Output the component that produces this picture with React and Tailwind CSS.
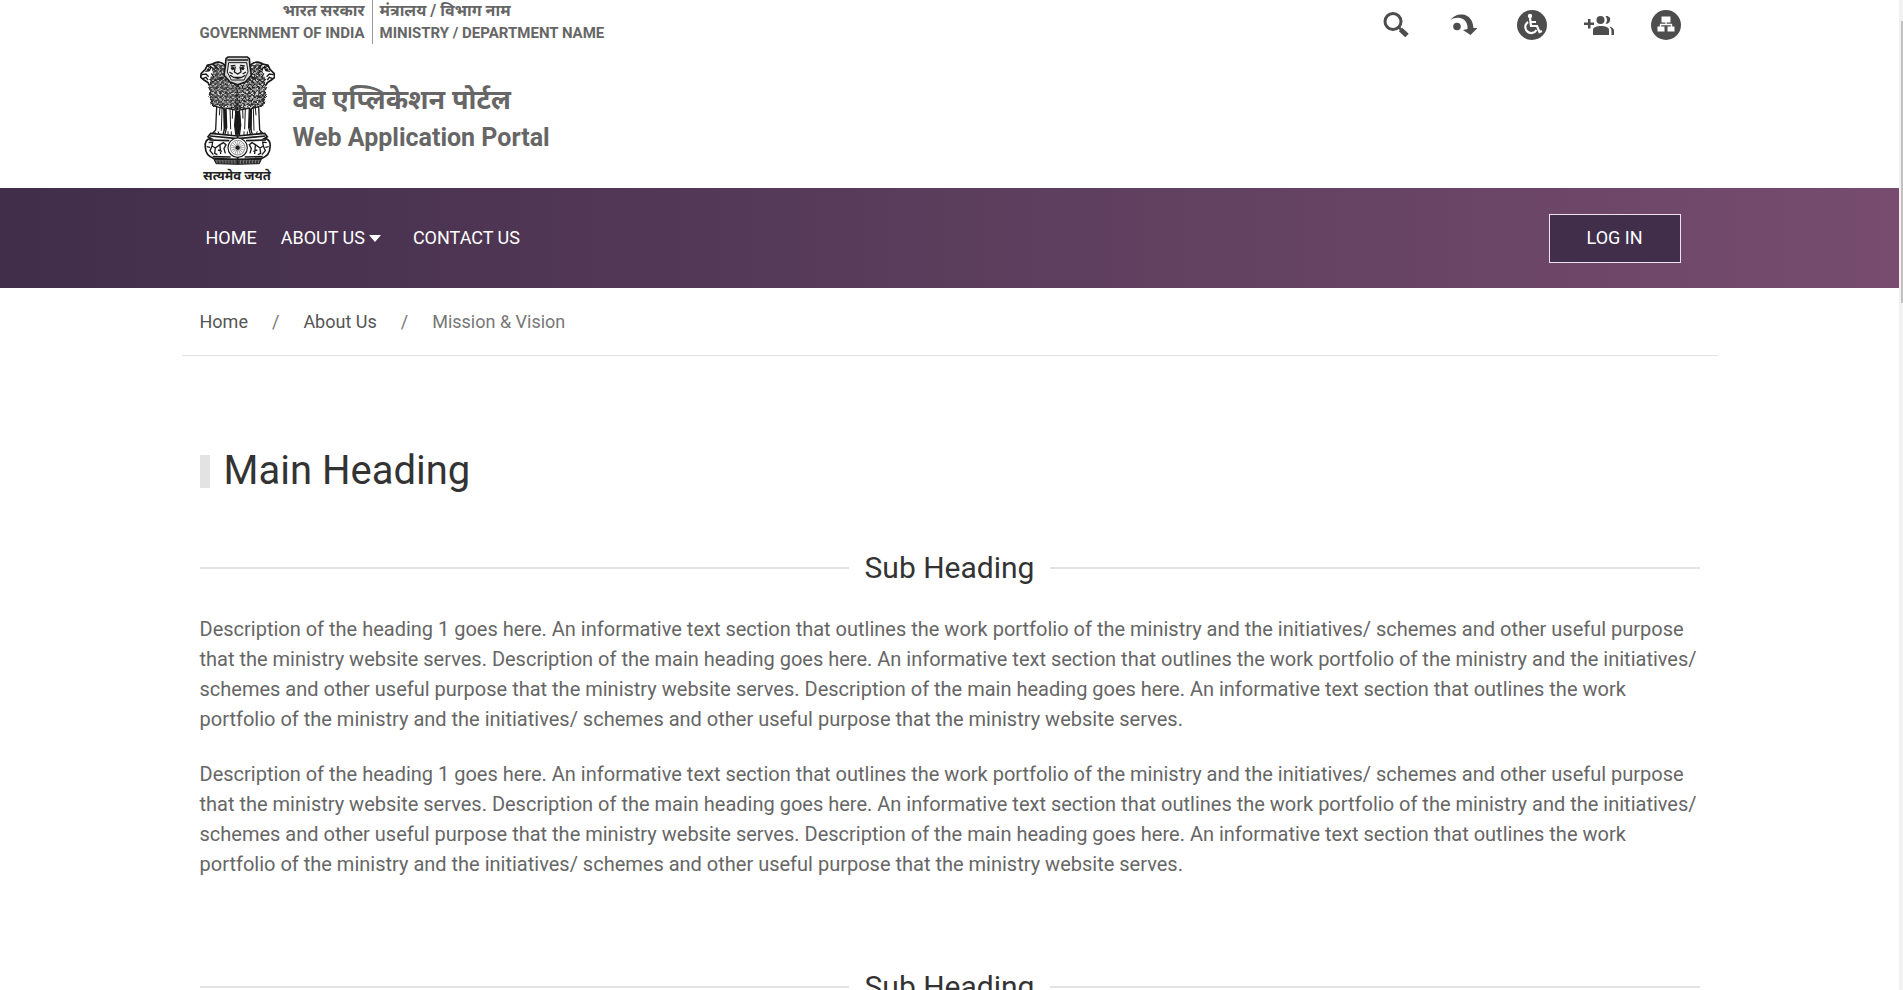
import React from 'react';

const LOREM_START =
    'Description of the heading 1 goes here. An informative text section that outlines the work portfolio of the ministry and the initiatives/ schemes and other useful purpose that the ministry website serves.';
const LOREM_REPEAT =
    'Description of the main heading goes here. An informative text section that outlines the work portfolio of the ministry and the initiatives/ schemes and other useful purpose that the ministry website serves.';

const paragraph = `${LOREM_START} ${LOREM_REPEAT} ${LOREM_REPEAT}`;

// One half of the emblem, mirrored for the other side
const EmblemHalf = () => (
    <g>
        {/* Side lion head */}
        <path
            d="M108 62 C98 48 82 48 70 56 L54 60 L48 72 L36 84 L34 96 L44 104 L56 112 L64 124 L96 130 L112 100Z"
            fill="#fff"
        />
        <g filter="url(#rough)">
            <path d="M66 58 L86 52 L106 62 L112 100 L100 130 L62 124 L58 104 L72 90Z" fill="url(#mane)" stroke="none" />
        </g>
        <path d="M54 62 L64 68 L60 76 L48 78 M38 88 L50 86 L58 94 M40 100 L50 96 L56 104 M62 62 L76 74 M70 56 L86 70 M66 84 L74 96" strokeWidth="4" />
        <circle cx="57" cy="73" r="3" fill="#1a1a1a" />
        <path d="M108 62 C98 48 82 48 70 56 L54 60 L48 72 L36 84 L34 96 L44 104 L56 112 L60 120" strokeWidth="5" />
        {/* Body mane */}
        <g filter="url(#rough)">
            <path
                d="M62 112 L112 92 L147 118 L147 194 L130 186 L122 194 L110 182 L98 190 L84 178 L70 182 L66 166 L58 152 L64 138 L58 126Z"
                fill="url(#mane)"
                strokeWidth="3"
            />
        </g>
        {/* Legs */}
        <path d="M82 184 L79 254 L68 266 L100 270 L106 250 L104 190Z" fill="#fff" strokeWidth="4" />
        <path d="M110 188 L112 246 L106 270 L140 272 L136 240 L140 194Z" fill="#fff" strokeWidth="4" />
        <path d="M92 186 L90 210 M98 190 L96 256 M122 190 L124 252 M130 190 L129 220 M76 260 L82 268 M86 258 L90 268 M116 258 L116 270 M126 258 L126 270" strokeWidth="3" />
        <path d="M102 190 L110 190 L112 246 L103 258Z M138 196 H147 V268 H140 L136 240Z" fill="#1a1a1a" stroke="none" />
        {/* Abacus side */}
        <path
            d="M145 272 L64 264 L56 274 L66 280 C50 280 46 292 48 306 C48 324 58 334 74 340 L145 342Z"
            fill="#fff"
            strokeWidth="5"
        />
        <path d="M62 272 L145 280 M60 284 L120 286 M70 334 L124 335" strokeWidth="5" />
        <path d="M58 292 L70 290 L68 302 L78 308 L92 298 L102 292 L110 298 L104 310 L108 324 M68 302 L62 316 L72 328 M78 308 L76 324 L84 328 M92 300 L94 326 M86 314 L98 318 M52 304 L62 306" strokeWidth="4" />
        {/* Plinth */}
        <path d="M74 342 L80 355 L145 357 L145 343Z" fill="url(#plinth)" strokeWidth="3" />
    </g>
);

const Emblem = () => (
    <svg className="w-[75px] h-[110px]" viewBox="32 32 225 330" fill="none" stroke="#1a1a1a" strokeWidth="3" aria-hidden="true">
        <defs>
            <filter id="rough">
                <feTurbulence type="fractalNoise" baseFrequency="0.09" numOctaves="2" seed="4" />
                <feDisplacementMap in="SourceGraphic" scale="12" xChannelSelector="R" yChannelSelector="G" />
            </filter>
            <pattern id="mane" width="15" height="13" patternUnits="userSpaceOnUse">
                <rect width="15" height="13" fill="#e0e0e0" stroke="none" />
                <path d="M0 3 Q4 -2 7 3 T15 3 M3 6 Q3 11 8 10 Q12 8 11 5 M0 13 Q3 8 6 13 M12 9 L15 12" stroke="#1a1a1a" strokeWidth="3" fill="none" />
            </pattern>
            <pattern id="plinth" width="9" height="14" patternUnits="userSpaceOnUse">
                <rect width="9" height="14" fill="#333" stroke="none" />
                <path d="M2 0 V14 M5 6 L8 10" stroke="#aaa" strokeWidth="2" />
            </pattern>
        </defs>
        <EmblemHalf />
        <g transform="translate(290 0) scale(-1 1)">
            <EmblemHalf />
        </g>
        {/* Front lion head */}
        <path d="M110 40 L116 35 L174 35 L180 40 L182 62 L186 90 L168 110 L145 118 L122 110 L104 90 L108 62Z" fill="#d5d5d5" strokeWidth="5" />
        <path d="M118 52 L172 52 L176 80 L164 104 L126 104 L114 80Z" fill="#eee" strokeWidth="3" />
        <path d="M114 44 H176 M124 62 L138 60 M152 60 L166 62 M138 64 L135 80 L145 86 L155 80 L152 64 M122 90 Q145 108 168 90 M120 80 L130 86 M170 80 L160 86 M132 96 H158" strokeWidth="4" />
        <circle cx="130" cy="69" r="4" fill="#1a1a1a" />
        <circle cx="160" cy="69" r="4" fill="#1a1a1a" />
        {/* Wheel */}
        <circle cx="145" cy="307" r="29" fill="#fff" strokeWidth="3.5" />
        <circle cx="145" cy="307" r="22" strokeWidth="2" stroke="#555" />
        {[0, 22, 45, 67, 90, 112, 135, 157].map((deg) => (
            <path key={deg} d="M125 307 H165" strokeWidth="1.5" stroke="#555" transform={`rotate(${deg} 145 307)`} />
        ))}
        <circle cx="145" cy="307" r="5" fill="#1a1a1a" />
    </svg>
);

const SearchIcon = () => (
    <svg className="w-[30px] h-[30px]" viewBox="0 0 30 30" fill="none" stroke="#4d4d4d">
        <circle cx="10" cy="11.5" r="8" strokeWidth="3" />
        <path d="M15.5 17 L18 19.5" strokeWidth="2.5" />
        <path d="M17.5 19.5 L24 25.5" strokeWidth="5" />
    </svg>
);

const SkipIcon = () => (
    <svg className="w-[30px] h-[30px]" viewBox="0 0 30 30" fill="#4d4d4d">
        <circle cx="7" cy="16.5" r="3.8" />
        <path d="M0.500 10 C3 6 8 4 13 4.500 C19 5.500 23 10 23.500 18 L27.500 18 L20.500 25 L13 20 L17.500 19 C18 13 15 9 10 8 C6 7.500 3 8.500 0.500 10Z" />
    </svg>
);

const AccessIcon = () => (
    <svg className="w-[30px] h-[30px]" viewBox="0 0 30 30">
        <circle cx="15" cy="15" r="15" fill="#4d4d4d" />
        <circle cx="13" cy="6" r="2.2" fill="#fff" />
        <g fill="none" stroke="#fff" strokeWidth="2.2">
            <path d="M13 8 L14 16 H20 L22.5 22 L25 21 M13.5 12 H19" />
            <path d="M11 12 A6 6 0 1 0 19.5 20" />
        </g>
    </svg>
);

const GroupAddIcon = () => (
    <svg className="w-[30px] h-[30px]" viewBox="0 0 30 30" fill="#4d4d4d">
        <path d="M4 9 H6.5 V12.5 H10 V15 H6.5 V18.5 H4 V15 H0 V12.5 H4Z" />
        <circle cx="16.5" cy="10" r="4" />
        <path d="M9 25 V20 C9 17 13 16 17 16 C21 16 25 17 25 20 V25Z" />
        <path d="M21.5 6 C25 5.5 27 8 26 11 C25 13.5 23 14 21.5 13.8 C23.5 11.5 23.5 8.5 21.5 6Z" />
        <path d="M25 16.5 C28 17 30 18.5 30 21 V25 H27.5 V21 C27.5 19 26.5 17.5 25 16.5Z" />
    </svg>
);

const SitemapIcon = () => (
    <svg className="w-[30px] h-[30px]" viewBox="0 0 30 30">
        <circle cx="15" cy="15" r="15" fill="#4d4d4d" />
        <path d="M10.5 6.5 H19.5 V12.5 H10.5Z M6.5 16.5 H13.5 V21.5 H6.5Z M16.5 16.5 H23.500 V21.500 H16.500Z" fill="#fff" />
        <path d="M15 12 V14.5 M9.5 17 V14.5 H20.5 V17" fill="none" stroke="#fff" strokeWidth="1.3" />
    </svg>
);

const tools = [
    { label: 'Search', Icon: SearchIcon },
    { label: 'Skip to main content', Icon: SkipIcon },
    { label: 'Accessibility', Icon: AccessIcon },
    { label: 'Social links', Icon: GroupAddIcon },
    { label: 'Sitemap', Icon: SitemapIcon },
];

const Header = () => (
    <header className="w-full max-w-[1536px] mx-auto pl-[18px] pr-[37px] text-[#666]">
        <div className="flex items-start justify-between h-11">
            <div className="flex text-[15px] leading-[22px] font-bold">
                <div className="pr-[7px] border-r border-[#999] text-right">
                    <p lang="hi" className="text-base leading-[22px]">भारत सरकार</p>
                    <p>GOVERNMENT OF INDIA</p>
                </div>
                <div className="pl-[7px]">
                    <p lang="hi" className="text-base leading-[22px]">मंत्रालय / विभाग नाम</p>
                    <p>MINISTRY / DEPARTMENT NAME</p>
                </div>
            </div>
            <div className="flex gap-[37px] pt-[10px]">
                {tools.map(({ label, Icon }) => (
                    <button key={label} type="button" aria-label={label}>
                        <Icon />
                    </button>
                ))}
            </div>
        </div>
        <a href="#home" className="inline-flex gap-[18px] pt-3 h-36">
            <span className="flex flex-col items-center w-[75px]">
                <Emblem />
                <span lang="hi" className="text-[13px] leading-5 font-bold text-[#222] whitespace-nowrap">सत्यमेव जयते</span>
            </span>
            <span className="flex flex-col pt-6 font-bold">
                <span lang="hi" className="text-[27px] leading-10">वेब एप्लिकेशन पोर्टल</span>
                <span className="text-[25px] leading-9">Web Application Portal</span>
            </span>
        </a>
    </header>
);

const Navbar = () => (
    <nav className="bg-gradient-to-r from-[#402e4a] to-[#774c6e] text-white text-lg">
        <div className="flex items-center justify-between w-full max-w-[1536px] h-[100px] mx-auto pl-6 pr-[37px]">
            <ul className="flex items-center">
                <li><a href="#home">HOME</a></li>
                <li className="ml-6">
                    <button type="button" className="flex items-center gap-1">
                        ABOUT US
                        <svg className="w-3 h-[7px]" viewBox="0 0 12 7" fill="currentColor">
                            <path d="M0 0 H12 L6 7Z" />
                        </svg>
                    </button>
                </li>
                <li className="ml-8"><a href="#contact">CONTACT US</a></li>
            </ul>
            <button type="button" className="w-[132px] h-[49px] bg-[#402e4a] border border-[#f0e0f0]">
                LOG IN
            </button>
        </div>
    </nav>
);

const Breadcrumb = () => (
    <nav aria-label="Breadcrumb" className="w-full max-w-[1536px] mx-auto px-[18px] h-[68px] border-b border-[#e3e3e3]">
        <ol className="flex items-center h-[68px] text-lg text-[#777]">
            <li><a href="#home" className="text-[#555]">Home</a></li>
            <li aria-hidden="true" className="px-6">/</li>
            <li><a href="#about" className="text-[#555]">About Us</a></li>
            <li aria-hidden="true" className="px-6">/</li>
            <li aria-current="page">Mission &amp; Vision</li>
        </ol>
    </nav>
);

const Section = ({ title, paragraphs }) => (
    <section className="mb-[90px]">
        <h2 className="flex items-center gap-4 text-3xl leading-9 text-[#333]">
            <span className="flex-1 h-[2px] bg-[#e3e3e3]"></span>
            {title}
            <span className="flex-1 h-[2px] bg-[#e3e3e3]"></span>
        </h2>
        <div className="mt-7 space-y-[25px] text-xl leading-[30px] text-[#666]">
            {paragraphs.map((text, i) => (
                <p key={i}>{text}</p>
            ))}
        </div>
    </section>
);

const App = () => (
    <div className="flex h-screen overflow-hidden bg-white font-['Roboto','Noto_Sans','Noto_Sans_Devanagari',sans-serif]">
        <div className="flex-1 min-w-0">
            <Header />
            <Navbar />
            <Breadcrumb />
            <main className="w-full max-w-[1536px] mx-auto px-[18px]">
                <h1 className="flex items-center gap-[14px] pt-[87px] mb-[51px] text-[40px] leading-[56px] text-[#333]">
                    <span className="w-[10px] h-[33px] bg-[#e3e3e3]"></span>
                    Main Heading
                </h1>
                <Section title="Sub Heading" paragraphs={[paragraph, paragraph]} />
                <Section title="Sub Heading" paragraphs={[paragraph]} />
            </main>
        </div>
        {/* Page scrollbar */}
        <div className="flex flex-col items-end w-1 pt-[21px] bg-[#f1f1f1]">
            <div className="w-[2px] h-[282px] bg-[#c1c1c1]"></div>
        </div>
    </div>
);

export default App;
